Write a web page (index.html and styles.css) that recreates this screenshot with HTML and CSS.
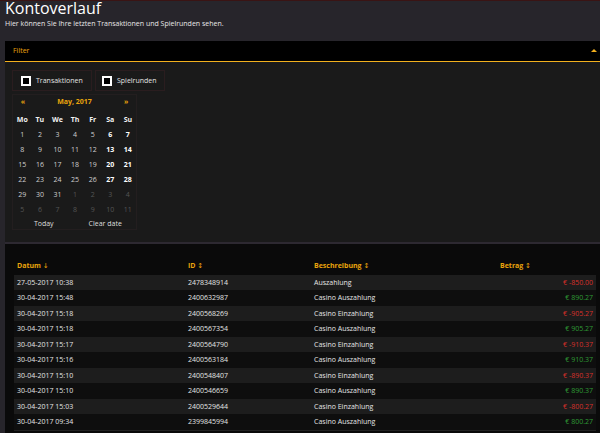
FILE: index.html
```html
<!DOCTYPE html>
<html lang="de">
<head>
<meta charset="utf-8">
<title>Kontoverlauf</title>
<link rel="stylesheet" href="styles.css">
</head>
<body>
<div class="page">
  <h1 class="title">Kontoverlauf</h1>
  <p class="subtitle">Hier können Sie Ihre letzten Transaktionen und Spielrunden sehen.</p>

  <section class="filter">
    <div class="filter-head">
      <span class="filter-label">Filter</span>
      <span class="caret"></span>
    </div>
    <div class="filter-body">
      <div class="checks">
        <label class="check check-a"><span class="box"></span>Transaktionen</label>
        <label class="check check-b"><span class="box"></span>Spielrunden</label>
      </div>
      <div class="cal">
        <div class="cal-head">
          <span class="nav">«</span>
          <span class="month">May, 2017</span>
          <span class="nav">»</span>
        </div>
        <div class="cal-grid">
          <span class="dn">Mo</span><span class="dn">Tu</span><span class="dn">We</span><span class="dn">Th</span><span class="dn">Fr</span><span class="dn">Sa</span><span class="dn">Su</span>
          <span>1</span><span>2</span><span>3</span><span>4</span><span>5</span><span class="we">6</span><span class="we">7</span>
          <span>8</span><span>9</span><span>10</span><span>11</span><span>12</span><span class="we">13</span><span class="we">14</span>
          <span>15</span><span>16</span><span>17</span><span>18</span><span>19</span><span class="we">20</span><span class="we">21</span>
          <span>22</span><span>23</span><span>24</span><span>25</span><span>26</span><span class="we">27</span><span class="we">28</span>
          <span>29</span><span>30</span><span>31</span><span class="om">1</span><span class="om">2</span><span class="om">3</span><span class="om">4</span>
          <span class="om">5</span><span class="om">6</span><span class="om">7</span><span class="om">8</span><span class="om">9</span><span class="om">10</span><span class="om">11</span>
        </div>
        <div class="cal-foot">
          <span>Today</span>
          <span>Clear date</span>
        </div>
      </div>
    </div>
  </section>

  <section class="results">
    <table class="tx">
      <colgroup>
        <col class="c-date"><col class="c-id"><col class="c-desc"><col class="c-amt">
      </colgroup>
      <thead>
        <tr><th>Datum <span class="sort">↓</span></th><th>ID <span class="sort">↕</span></th><th>Beschreibung <span class="sort">↕</span></th><th>Betrag <span class="sort">↕</span></th></tr>
      </thead>
      <tbody>
        <tr><td>27-05-2017 10:38</td><td>2478348914</td><td>Auszahlung</td><td class="amt neg">€ -850.00</td></tr>
        <tr><td>30-04-2017 15:48</td><td>2400632987</td><td>Casino Auszahlung</td><td class="amt pos">€ 890.27</td></tr>
        <tr><td>30-04-2017 15:18</td><td>2400568269</td><td>Casino Einzahlung</td><td class="amt neg">€ -905.27</td></tr>
        <tr><td>30-04-2017 15:18</td><td>2400567354</td><td>Casino Auszahlung</td><td class="amt pos">€ 905.27</td></tr>
        <tr><td>30-04-2017 15:17</td><td>2400564790</td><td>Casino Einzahlung</td><td class="amt neg">€ -910.37</td></tr>
        <tr><td>30-04-2017 15:16</td><td>2400563184</td><td>Casino Auszahlung</td><td class="amt pos">€ 910.37</td></tr>
        <tr><td>30-04-2017 15:10</td><td>2400548407</td><td>Casino Einzahlung</td><td class="amt neg">€ -890.37</td></tr>
        <tr><td>30-04-2017 15:10</td><td>2400546659</td><td>Casino Auszahlung</td><td class="amt pos">€ 890.37</td></tr>
        <tr><td>30-04-2017 15:03</td><td>2400529644</td><td>Casino Einzahlung</td><td class="amt neg">€ -800.27</td></tr>
        <tr><td>30-04-2017 09:34</td><td>2399845994</td><td>Casino Auszahlung</td><td class="amt pos">€ 800.27</td></tr>
      </tbody>
    </table>
  </section>
</div>
</body>
</html>
```

FILE: styles.css
```css
html, body {
  margin: 0;
  padding: 0;
  background: #27252b;
  height: 100%;
  overflow: hidden;
}

body {
  position: relative;
  font-family: "Open Sans", "DejaVu Sans", sans-serif;
  color: #e6e6e6;
}

body::before {
  content: "";
  position: absolute;
  left: 0;
  right: 0;
  top: 0;
  height: 1px;
  background: #3a1414;
}

.page {
  padding-left: 5px;
}

.title {
  margin: 0;
  font-size: 16px;
  line-height: 16px;
  font-weight: 400;
  color: #ffffff;
}

.subtitle {
  margin: 3px 0 0;
  font-size: 7px;
  line-height: 9px;
  color: #e8e8e8;
}

.filter {
  margin-top: 13px;
}

.filter-head {
  position: relative;
  height: 20px;
  background: #000;
  border-bottom: 1px solid #f2b01e;
  padding-left: 8px;
  display: flex;
  align-items: center;
}

.filter-label {
  font-size: 7px;
  line-height: 20px;
  color: #e9a40c;
}

.caret {
  position: absolute;
  right: 3px;
  top: 8px;
  width: 0;
  height: 0;
  border-left: 3px solid transparent;
  border-right: 3px solid transparent;
  border-bottom: 3px solid #f2b01e;
}

.filter-body {
  height: 172px;
  background: #1a1a1a;
  border-bottom: 2px solid #2d2931;
  padding: 8px 0 0 7px;
}

.checks {
  display: flex;
  gap: 3px;
}

.check {
  display: flex;
  align-items: center;
  height: 19px;
  border: 1px solid #2a1d1f;
  padding: 0 9px 0 8px;
  font-size: 7px;
  color: #e2e2e2;
  gap: 5px;
}

.check-a {
  width: 61px;
}

.check-b {
  width: 53px;
  padding-left: 6px;
}

.box {
  width: 6px;
  height: 6px;
  border: 2px solid #ffffff;
  background: #000;
  flex: none;
}

.cal {
  margin-top: 3px;
  width: 123px;
  height: 134px;
  border: 1px solid #231e1f;
  font-size: 7px;
}

.cal-head {
  display: grid;
  grid-template-columns: 17.6px 1fr 17.6px;
  height: 16.5px;
  line-height: 13px;
  padding-left: 1px;
  padding-right: 1px;
  text-align: center;
  color: #e9a40c;
  font-weight: 700;
}

.cal-grid {
  display: grid;
  grid-template-columns: repeat(7, 17.6px);
  grid-auto-rows: 15px;
  padding-left: 0.5px;
  line-height: 15px;
  text-align: center;
  color: #cfcfcf;
}

.cal-grid .dn {
  font-weight: 700;
  color: #f2f2f2;
  height: 14.5px;
}

.cal-grid .we {
  font-weight: 700;
  color: #ffffff;
}

.cal-grid .om {
  color: #555555;
}

.cal-foot {
  display: grid;
  grid-template-columns: 1fr 1fr;
  line-height: 13px;
  text-align: center;
  color: #dedede;
}

.results {
  background: #0a0a0a;
  padding: 14px 4px 3px 9px;
}

.tx {
  width: 582px;
  border-collapse: collapse;
  table-layout: fixed;
  font-size: 7px;
}

.c-date { width: 171px; }
.c-id { width: 126px; }
.c-desc { width: 186px; }
.c-amt { width: 99px; }

.tx th {
  text-align: left;
  font-weight: 700;
  color: #e9a40c;
  height: 15.5px;
  line-height: 15.5px;
  padding: 0 3px;
}

.sort {
  font-weight: 400;
  font-family: "DejaVu Sans", sans-serif;
  font-size: 7px;
}

.tx td {
  height: 15.5px;
  line-height: 15.5px;
  padding: 0 3px;
  color: #e4e4e4;
  white-space: nowrap;
}

.tx tbody tr:nth-child(odd) td {
  background: #1d1d1d;
}

.tx tbody tr:nth-child(even) td {
  background: #0e0e0e;
}

.tx tbody tr:last-child td {
  border-bottom: 1px solid #222;
}

.tx td.amt {
  text-align: right;
}

.tx td.neg {
  color: #d8302a;
}

.tx td.pos {
  color: #2e9a35;
}
```
